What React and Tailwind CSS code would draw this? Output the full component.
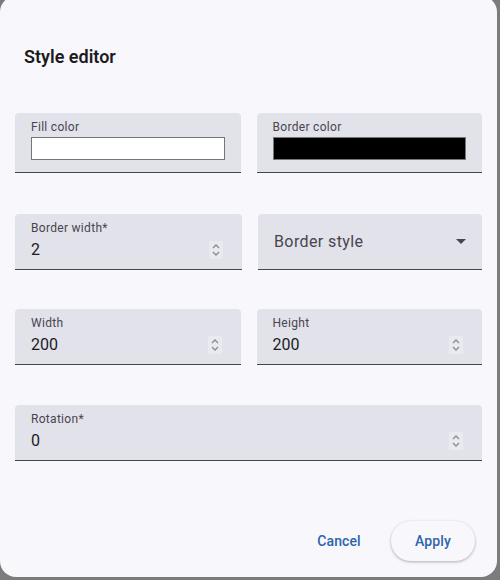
import React from 'react';

const font = { fontFamily: 'Roboto, "Noto Sans", sans-serif' };

function Spinner() {
  return (
    <div className="flex h-[18px] w-[14px] items-center justify-center bg-[#e9eaf0]">
      <svg width="12" height="16" viewBox="0 0 12 16" fill="none" stroke="#8a8a90" strokeWidth="1.3">
        <path d="M3 6 L6 3 L9 6" />
        <path d="M3 10 L6 13 L9 10" />
      </svg>
    </div>
  );
}

function NumberField({ label, value, className = '' }) {
  return (
    <div className={`flex h-[56px] flex-col rounded-t-[4px] border-b border-[#49454f] bg-[#e1e2ea] pl-4 pr-[19px] pt-[6px] ${className}`}>
      <div className="text-[12px] leading-4 tracking-[0.3px] text-[#49454f]">{label}</div>
      <div className="mt-[2px] flex items-center justify-between">
        <span className="text-[16px] leading-6 text-[#1c1b1f]">{value}</span>
        <Spinner />
      </div>
    </div>
  );
}

function ColorField({ label, color }) {
  return (
    <div className="flex h-[60px] flex-1 flex-col rounded-t-[4px] border-b border-[#49454f] bg-[#e1e2ea] pl-4 pr-4 pt-[6px]">
      <div className="text-[12px] leading-4 tracking-[0.3px] text-[#49454f]">{label}</div>
      <div className="mt-[2px] h-[23px] w-full border border-[#767676]" style={{ backgroundColor: color }} />
    </div>
  );
}

function SelectField({ label }) {
  return (
    <div className="flex h-[56px] flex-1 items-center justify-between rounded-t-[4px] border-b border-[#49454f] bg-[#e1e2ea] pl-4 pr-[16px]">
      <span className="text-[16px] leading-6 tracking-[0.4px] text-[#49454f]">{label}</span>
      <svg width="10" height="5" viewBox="0 0 10 5">
        <path d="M0 0 L10 0 L5 5 Z" fill="#49454f" />
      </svg>
    </div>
  );
}

export default function App() {
  return (
    <div className="relative h-[580px] w-[500px] overflow-hidden bg-[#7c7c7c]" style={font}>
      <div className="-mt-[4px] flex h-[581px] w-[497px] flex-col rounded-[16px] bg-[#f8f8fc]">
        <h2 className="ml-6 mt-[49px] text-[18px] font-semibold leading-6 text-[#1c1b1f]">Style editor</h2>

        <div className="mx-[15px] mt-[44px] flex flex-col">
          <div className="flex gap-4">
            <ColorField label="Fill color" color="#ffffff" />
            <ColorField label="Border color" color="#000000" />
          </div>

          <div className="mt-[41px] flex gap-4">
            <NumberField label="Border width*" value="2" className="flex-1" />
            <SelectField label="Border style" />
          </div>

          <div className="mt-[39px] flex gap-4">
            <NumberField label="Width" value="200" className="flex-1" />
            <NumberField label="Height" value="200" className="flex-1" />
          </div>

          <div className="mt-[40px] flex">
            <NumberField label="Rotation*" value="0" className="flex-1" />
          </div>
        </div>

        <div className="mr-[22px] mt-[60px] flex items-center justify-end gap-[18px]">
          <button className="h-10 w-[68px] rounded-full text-[14px] font-medium tracking-[0.1px] text-[#2d64ad]">
            Cancel
          </button>
          <button className="h-10 w-[84px] rounded-full bg-[#f8f8fc] text-[14px] font-medium tracking-[0.1px] text-[#2d64ad] shadow-[0_1px_3px_rgba(0,0,0,0.3)]">
            Apply
          </button>
        </div>
      </div>
    </div>
  );
}
